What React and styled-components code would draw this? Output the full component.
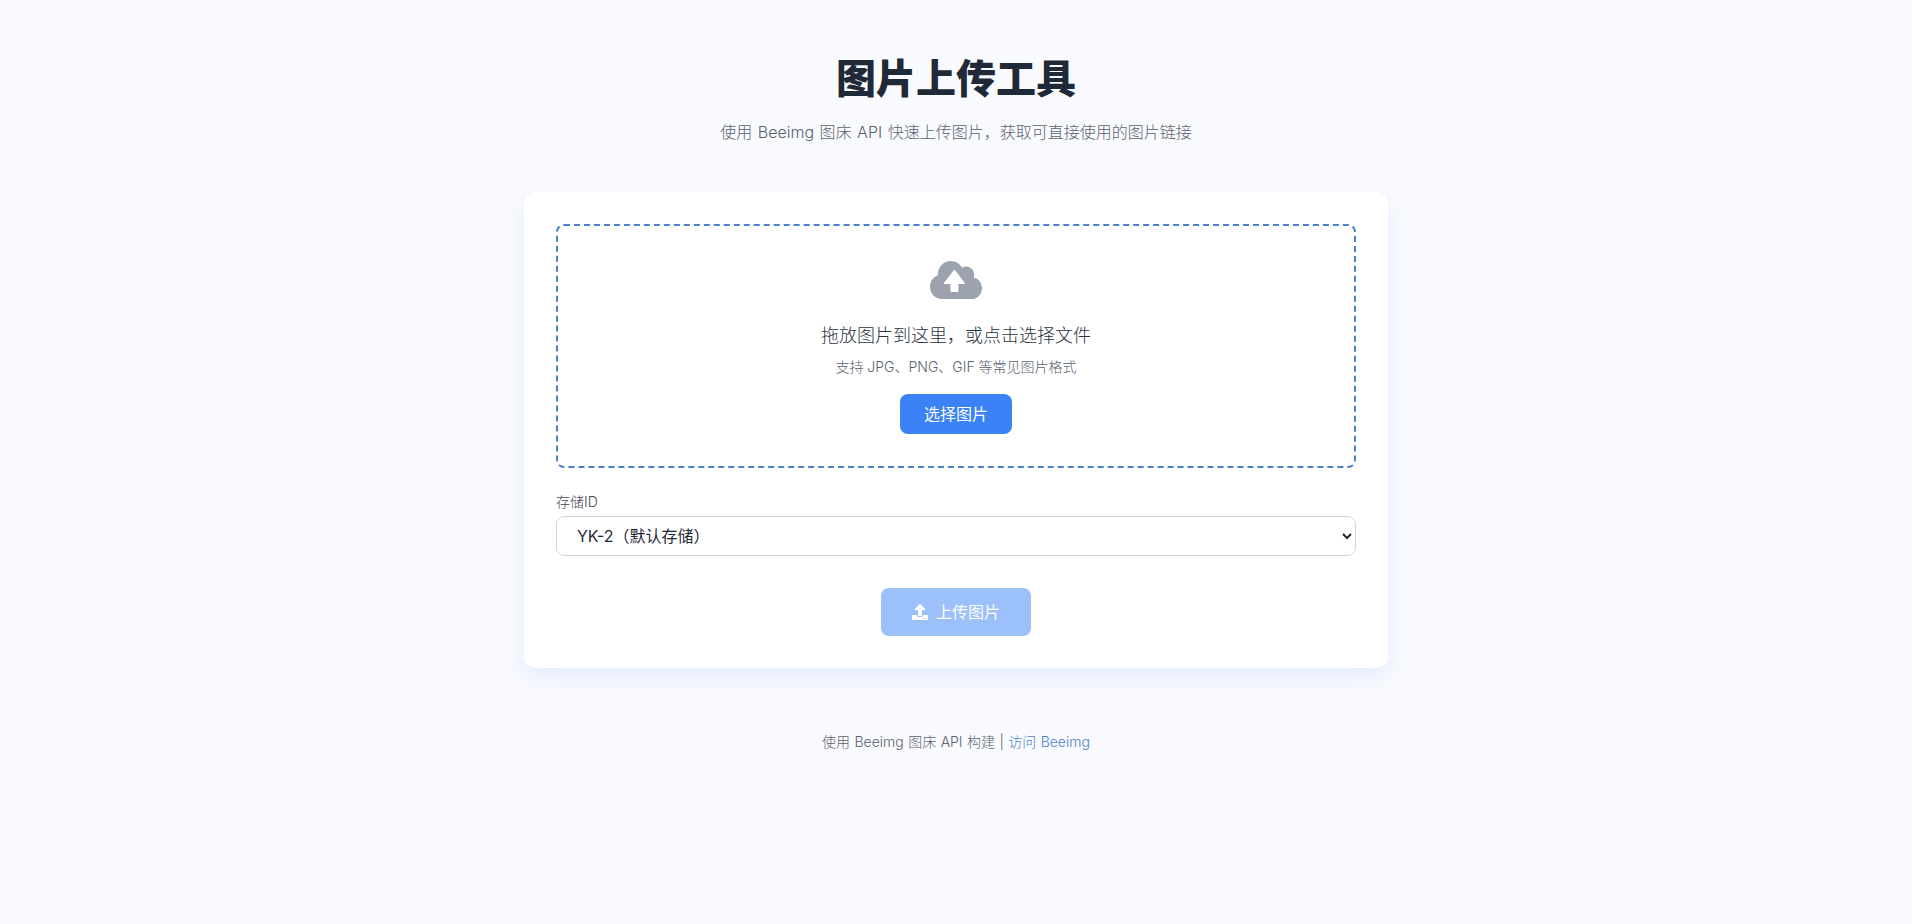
import React from 'react'
import styled, { createGlobalStyle } from 'styled-components'
import { FaUpload } from 'react-icons/fa'

const GlobalStyle = createGlobalStyle`
  * { box-sizing: border-box; }
  body {
    margin: 0;
    background: #f9fafe;
    color: #1f2937;
    font-family: Inter, "Noto Sans CJK SC", sans-serif;
    font-weight: 300;
    line-height: 1.6;
  }
`

const CloudUpload = ({ className }) => (
  <svg className={className} viewBox="0 32 640 448" preserveAspectRatio="none">
    <path
      fill="currentColor"
      d="M537.6 226.6c4.1-10.7 6.4-22.4 6.4-34.6 0-53-43-96-96-96-19.7 0-38.1 6-53.3 16.2C367 64.2 315.3 32 256 32c-88.4 0-160 71.6-160 160 0 2.7.1 5.4.2 8.1C40.2 219.8 0 273.2 0 336c0 79.5 64.5 144 144 144h368c70.7 0 128-57.3 128-128 0-61.9-44-113.6-102.4-125.4z"
    />
    <path
      fill="#fff"
      d="M292 142c5-6 12-6 17 0l118 146c5 7 2 15-7 15h-71v87c0 5-3 8-8 8h-81c-5 0-8-3-8-8v-87h-71c-9 0-12-8-7-15z"
    />
  </svg>
)

const App = () => {
  return (
    <>
      <GlobalStyle />
      <Page>
        <Header>
          <Title>图片上传工具</Title>
          <Subtitle>使用 Beeimg 图床 API 快速上传图片，获取可直接使用的图片链接</Subtitle>
        </Header>
        <Card>
          <DropZone>
            <CloudIcon />
            <DropTitle>拖放图片到这里，或点击选择文件</DropTitle>
            <DropHint>支持 JPG、PNG、GIF 等常见图片格式</DropHint>
            <ChooseButton type="button">选择图片</ChooseButton>
          </DropZone>
          <Field>
            <Label htmlFor="storage">存储ID</Label>
            <Select id="storage" defaultValue="yk2">
              <option value="yk2">YK-2（默认存储）</option>
            </Select>
          </Field>
          <Actions>
            <UploadButton type="button" disabled>
              <UploadIcon />
              上传图片
            </UploadButton>
          </Actions>
        </Card>
        <Footer>
          使用 Beeimg 图床 API 构建 | <FooterLink href="#">访问 Beeimg</FooterLink>
        </Footer>
      </Page>
    </>
  )
}

export default App

const Page = styled.div`
  min-height: 100vh;
  width: 864px;
  margin: 0 auto;
  padding-top: 47px;
`
const Header = styled.header`
  text-align: center;
  margin-bottom: 47px;
`
const Title = styled.h1`
  margin: 0 0 8px;
  font-size: 40px;
  font-weight: 900;
  line-height: 64px;
  color: #1f2937;
`
const Subtitle = styled.p`
  margin: 0;
  font-size: 16px;
  line-height: 26px;
  word-spacing: 1px;
  color: #5a6270;
`
const Card = styled.main`
  background: #fff;
  border-radius: 12px;
  padding: 32px;
  box-shadow: 0 10px 25px rgba(59, 130, 246, 0.1);
`
const DropZone = styled.div`
  height: 244px;
  border: 2px dashed #4c82cc;
  border-radius: 8px;
  padding-top: 35px;
  display: flex;
  flex-direction: column;
  align-items: center;
`
const CloudIcon = styled(CloudUpload)`
  width: 52px;
  height: 38px;
  color: #9ca3af;
`
const DropTitle = styled.p`
  margin: 22px 0 0;
  font-size: 18px;
  line-height: 29px;
  color: #2b3340;
`
const DropHint = styled.p`
  margin: 6px 0 0;
  font-size: 14px;
  line-height: 22px;
  color: #5a6270;
`
const ChooseButton = styled.button`
  margin-top: 16px;
  height: 40px;
  padding: 2px 24px 0;
  border: 0;
  border-radius: 8px;
  background: #3b82f6;
  color: #fff;
  font: inherit;
  font-size: 16px;
  font-weight: 400;
`
const Field = styled.div`
  margin-top: 23px;
`
const Label = styled.label`
  display: block;
  margin-bottom: 3px;
  font-size: 14px;
  line-height: 22px;
  color: #3f4754;
`
const Select = styled.select`
  display: block;
  width: 100%;
  height: 40px;
  padding: 0 16px;
  border: 1px solid #d1d5db;
  border-radius: 8px;
  background: #fff;
  color: #1f2937;
  font: inherit;
  font-size: 16px;
  font-weight: 400;
`
const Actions = styled.div`
  display: flex;
  justify-content: center;
  margin-top: 32px;
`
const UploadButton = styled.button`
  display: flex;
  align-items: center;
  gap: 8px;
  height: 48px;
  padding: 2px 31px 0;
  border: 0;
  border-radius: 8px;
  background: #3b82f6;
  color: #fff;
  font: inherit;
  font-size: 16px;
  font-weight: 400;
  opacity: 0.5;
`
const UploadIcon = styled(FaUpload)`
  width: 16px;
  height: 16px;
  margin-top: -2px;
`
const Footer = styled.footer`
  margin-top: 62px;
  text-align: center;
  font-size: 14px;
  line-height: 24px;
  word-spacing: 0.5px;
  color: #5a6270;
`
const FooterLink = styled.a`
  color: #4a7fc8;
  text-decoration: none;
`
